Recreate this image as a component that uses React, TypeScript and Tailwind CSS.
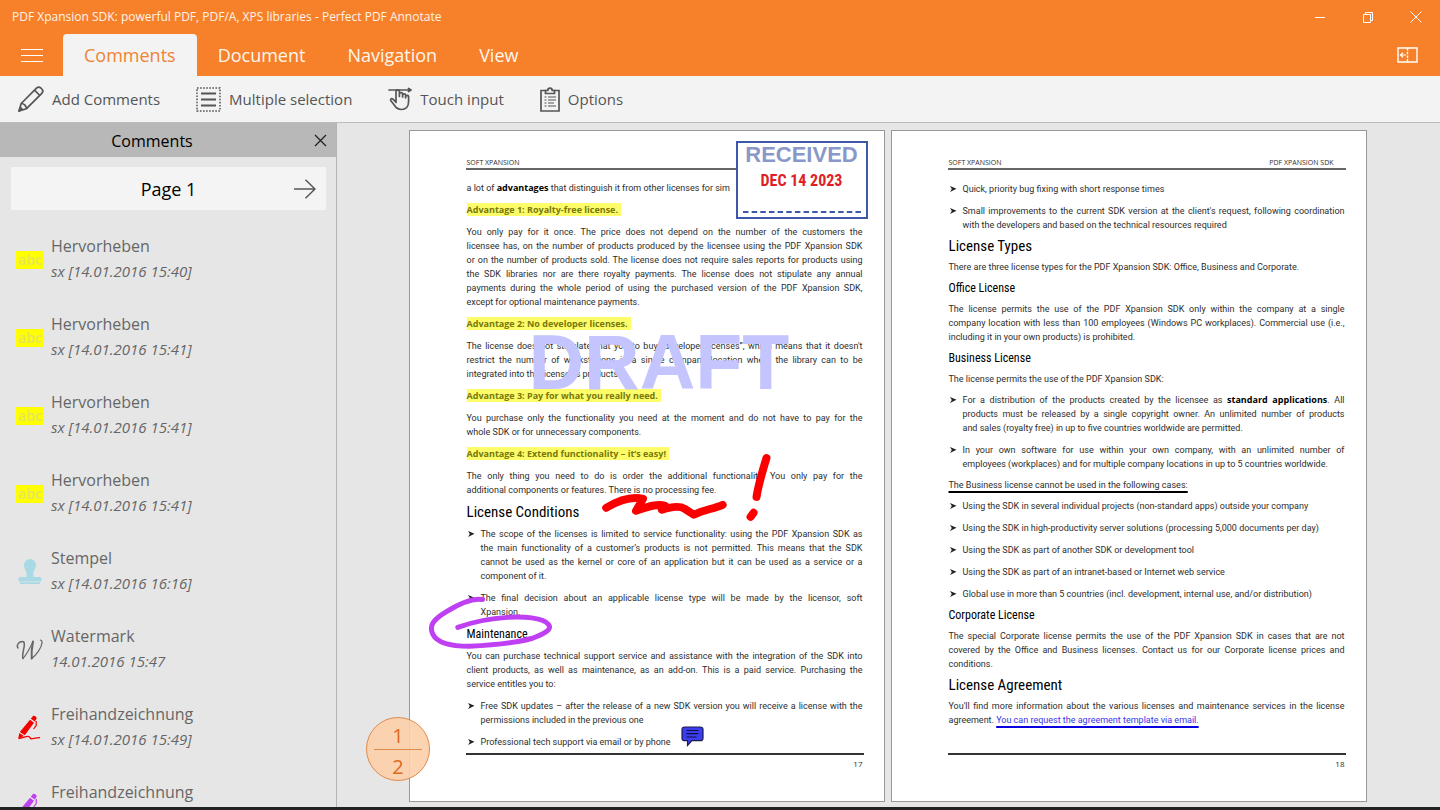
import type { ReactNode } from "react";
import clsx from "clsx";

type Kind = "highlight" | "stamp" | "watermark" | "ink-red" | "ink-purple";

type Comment = { kind: Kind; title: string; meta: string };

const COMMENTS: Comment[] = [
  { kind: "highlight", title: "Hervorheben", meta: "sx [14.01.2016 15:40]" },
  { kind: "highlight", title: "Hervorheben", meta: "sx [14.01.2016 15:41]" },
  { kind: "highlight", title: "Hervorheben", meta: "sx [14.01.2016 15:41]" },
  { kind: "highlight", title: "Hervorheben", meta: "sx [14.01.2016 15:41]" },
  { kind: "stamp", title: "Stempel", meta: "sx [14.01.2016 16:16]" },
  { kind: "watermark", title: "Watermark", meta: "14.01.2016 15:47" },
  { kind: "ink-red", title: "Freihandzeichnung", meta: "sx [14.01.2016 15:49]" },
  { kind: "ink-purple", title: "Freihandzeichnung", meta: "" },
];

const TABS = ["Comments", "Document", "Navigation", "View"];

function InkIcon({ color }: { color: string }) {
  return (
    <svg width="26" height="26" viewBox="0 0 26 26" fill={color}>
      <path d="M14.800 3.800 16.800 1.200c1-1.200 4.600 1 3.800 2.600l-1.800 2.800zM14 4.800l4 3L8.800 20.200l-5-3.200zM3.400 18l4.400 3-5.600 2.600z" />
      <path d="M20.200 6v4.500l-2.600 3.500" fill="none" stroke={color} strokeWidth="1.200" />
      <path
        d="M2.500 23.500c4-.3 7-2.200 9.500-2.200 2.500 0 1.500 2.500 3.500 2.500s4-1.200 8.500-1.200"
        fill="none"
        stroke={color}
        strokeWidth="1.300"
      />
    </svg>
  );
}

function CommentIcon({ kind }: { kind: Kind }) {
  switch (kind) {
    case "highlight":
      return (
        <span className="flex h-[18px] w-7 items-center justify-center bg-[#ffff00] text-[14px] leading-[16px] font-semibold text-[#e6e65a]">
          abc
        </span>
      );
    case "stamp":
      return (
        <svg width="28" height="26" viewBox="0 0 28 26" fill="#a9d9e5">
          <path d="M14 0a6 6 0 0 1 6 6c0 3.500-2.600 5.500-2.600 9.500V18H24a1.500 1.500 0 0 1 1.500 1.500V22.500h-23v-3A1.500 1.500 0 0 1 4 18h6.600v-2.500C10.600 11.500 8 9.500 8 6a6 6 0 0 1 6-6zM4 23.200h20V25H4z" />
        </svg>
      );
    case "watermark":
      return (
        <svg width="28" height="22" viewBox="0 0 28 22" fill="none" stroke="#666" strokeLinecap="round">
          <path d="M2 9C0 6 3 2.500 6.500 2.500c2.500 0 2 4 1 8.500-.8 3.500-.8 7.500-.5 8.500" strokeWidth="1.500" />
          <path d="M7 19.500C10 16 14.500 8 17 2.500" strokeWidth="1.100" />
          <path d="M17 2.500c-1 5-1.700 12-1.300 17" strokeWidth="2" />
          <path d="M15.700 19.500C20 16 25.500 9 26 4c.1-1.500-.5-2.800-1.600-3" strokeWidth="1.200" />
        </svg>
      );
    case "ink-red":
      return <InkIcon color="#f40000" />;
    case "ink-purple":
      return <InkIcon color="#c040f0" />;
  }
}

function PencilIcon() {
  return (
    <svg width="26" height="26" viewBox="0 0 26 26" fill="none" stroke="#555" strokeWidth="1.700" strokeLinejoin="round">
      <path d="M1 25l2.200-7.500L18.500 2.200c1.200-1.200 3-1.300 4.300-.2l1 1c1.300 1.200 1.200 3 0 4.300L8.500 22.700z" />
      <path d="M16.500 4.200l5.300 5.300M3.200 17.500c2.400-.2 5.200 2.300 5.300 5.200M1 25l1.500-3.500 2 2z" />
    </svg>
  );
}

function MultiSelectIcon() {
  return (
    <svg width="25" height="25" viewBox="0 0 25 25" fill="none" stroke="#555">
      <rect x="1" y="1" width="23" height="23" strokeWidth="1.500" strokeDasharray="1.600 1.470" />
      <path d="M5 6.500h15M5 12.500h15M5 18.500h15" strokeWidth="1.900" />
    </svg>
  );
}

function TouchIcon() {
  return (
    <svg width="24" height="24" viewBox="0 0 24 24" fill="none" stroke="#555" strokeWidth="1.700" strokeLinejoin="round" strokeLinecap="round">
      <path d="M1 3h21M20.500 1.500L23 3l-2.500 1.500" />
      <path d="M8 15.500V4.500c0-2.300 3.400-2.300 3.400 0v5M11.400 9V6.800c0-1.600 3.200-1.600 3.200 0V10M14.600 8c0-1.500 3-1.500 3 0v2.800M17.600 9.200c0-1.300 3-1.300 3 .2v5c0 5-2.600 8.100-7.300 8.100-3.600 0-5.200-1.500-6.900-4.200L2.700 13.500c-.6-1.600 1-2.500 2.300-1.400l3 3" />
    </svg>
  );
}

function ClipboardIcon() {
  return (
    <svg width="20" height="25" viewBox="0 0 20 25" fill="none" stroke="#555" strokeWidth="1.700">
      <path d="M6 3.500H1V24h18V3.500h-5" />
      <path d="M5.500 6.500v-3h2.300c0-3.200 4.400-3.200 4.400 0h2.300v3z" />
      <path d="M4.500 10h2M8 10h8M4.500 13h2M8 13h8M4.500 16h2M8 16h6M4.500 19h2M8 19h8" strokeWidth="1.200" />
    </svg>
  );
}

const TOOLS: { label: string; icon: ReactNode }[] = [
  { label: "Add Comments", icon: <PencilIcon /> },
  { label: "Multiple selection", icon: <MultiSelectIcon /> },
  { label: "Touch input", icon: <TouchIcon /> },
  { label: "Options", icon: <ClipboardIcon /> },
];

function TitleBar() {
  return (
    <div className="flex h-[34px] items-center justify-between pl-3 text-white">
      <h1 className="text-[12px] font-medium text-[#fff3e8]">
        PDF Xpansion SDK: powerful PDF, PDF/A, XPS libraries - Perfect PDF Annotate
      </h1>
      <div className="flex h-full">
        <button type="button" aria-label="Minimize" className="flex w-12 items-center justify-center">
          <svg width="12" height="12" viewBox="0 0 12 12" stroke="#fff" fill="none">
            <path d="M1 6.500h10" />
          </svg>
        </button>
        <button type="button" aria-label="Restore" className="flex w-12 items-center justify-center">
          <svg width="12" height="12" viewBox="0 0 12 12" stroke="#fff" fill="none">
            <path d="M1.500 3.500h7v8h-7zM3.500 3.500v-2h7v8h-2" />
          </svg>
        </button>
        <button type="button" aria-label="Close" className="flex w-12 items-center justify-center">
          <svg width="12" height="12" viewBox="0 0 12 12" stroke="#fff" fill="none">
            <path d="M.5.5l11 11M11.500.5l-11 11" />
          </svg>
        </button>
      </div>
    </div>
  );
}

function TabBar() {
  return (
    <nav className="flex h-[42px] items-center pr-[22px] text-[18px] text-[#fff6ee]">
      <button type="button" aria-label="Menu" className="flex h-full w-[63px] items-center justify-center">
        <svg width="22" height="14" viewBox="0 0 22 14" stroke="#fff" fill="none">
          <path d="M0 1.500h22M0 7.500h22M0 13.500h22" />
        </svg>
      </button>
      {TABS.map((tab, i) => (
        <button
          key={tab}
          type="button"
          className={clsx(
            "h-full px-[21px]",
            i === 0 && "rounded-t-[4px] bg-[#f3f3f3] text-[#ef8433]",
          )}
        >
          {tab}
        </button>
      ))}
      <button type="button" aria-label="Toggle panel" className="ml-auto">
        <svg width="21" height="16" viewBox="0 0 21 16" stroke="#fff" fill="none" strokeWidth="1.400">
          <path d="M1 1h19v14H1z" />
          <path d="M10.500 1v14" strokeDasharray="2.500 1.200" />
          <path d="M3.500 8H9M6 5.800L3.500 8 6 10.200" strokeWidth="1.200" />
        </svg>
      </button>
    </nav>
  );
}

function Toolbar() {
  return (
    <div className="flex h-[47px] shrink-0 items-center gap-9 border-b border-[#bdbdbd] bg-[#f3f3f3] pl-[18px] text-[15px] text-[#555]">
      {TOOLS.map((tool) => (
        <button key={tool.label} type="button" className="flex items-center gap-2">
          {tool.icon}
          {tool.label}
        </button>
      ))}
    </div>
  );
}

function CommentsPanel() {
  return (
    <aside className="flex w-[337px] shrink-0 flex-col overflow-hidden border-r border-[#b4b4b4]">
      <div className="flex h-[34px] shrink-0 items-center bg-[#b8b8b8] pr-[7px]">
        <h2 className="flex-1 pt-[2px] pr-2 text-center text-[16px] text-black">Comments</h2>
        <button type="button" aria-label="Close panel" className="p-[2px]">
          <svg width="13" height="13" viewBox="0 0 13 13" stroke="#222" fill="none" strokeWidth="1.300">
            <path d="M1 1l11 11M12 1L1 12" />
          </svg>
        </button>
      </div>
      <div className="mr-[10px] ml-[11px] mt-[10px] flex h-[43px] shrink-0 items-center bg-[#f4f4f4] pr-[10px]">
        <span className="flex-1 pt-px pl-8 text-center text-[18px] text-black">Page 1</span>
        <button type="button" aria-label="Next page">
          <svg width="22" height="20" viewBox="0 0 22 20" stroke="#555" fill="none" strokeWidth="1.500">
            <path d="M0 10h21M11.500.8L21 10l-9.500 9.200" />
          </svg>
        </button>
      </div>
      <ul className="mt-6">
        {COMMENTS.map((comment, i) => (
          <li key={i} className="flex h-[78px] pl-4">
            <span className="flex h-[52px] w-[35px] shrink-0 items-center">
              <CommentIcon kind={comment.kind} />
            </span>
            <div className="text-[#666]">
              <div className="text-[16px] leading-[25px]">{comment.title}</div>
              <div className="text-[15px] leading-[25px] italic">{comment.meta}</div>
            </div>
          </li>
        ))}
      </ul>
    </aside>
  );
}

// Each entry is one printed line; every line but the last is justified.
function Lines({ lines }: { lines: ReactNode[] }) {
  return (
    <p>
      {lines.map((line, i) => (
        <span
          key={i}
          className={clsx(
            "block whitespace-nowrap",
            i < lines.length - 1 && "[text-align-last:justify]",
          )}
        >
          {line}
        </span>
      ))}
    </p>
  );
}

function Bullets({ items }: { items: ReactNode[][] }) {
  return (
    <ul className="flex flex-col gap-2">
      {items.map((lines, i) => (
        <li key={i} className="flex">
          <span className="w-[14px] shrink-0">
            <svg width="7" height="6" viewBox="0 0 7 6" className="mt-1 ml-px" fill="#222">
              <path d="M0 0L6.500 2.800 0 6 1.800 3z" />
            </svg>
          </span>
          <div className="min-w-0 flex-1">
            <Lines lines={lines} />
          </div>
        </li>
      ))}
    </ul>
  );
}

function Strong({ children }: { children: ReactNode }) {
  return <strong className="font-['Open_Sans'] text-black">{children}</strong>;
}

function Marked({ children }: { children: ReactNode }) {
  return (
    <h4 className="font-['Open_Sans'] font-bold text-[#77770a]">
      <mark className="bg-[#fdfd6a] pr-[3px] text-inherit">{children}</mark>
    </h4>
  );
}

function Heading({ children }: { children: ReactNode }) {
  return <h2 className="font-['Roboto_Condensed','Lato'] text-[15px] text-black">{children}</h2>;
}

function SubHeading({ children }: { children: ReactNode }) {
  return <h3 className="font-['Roboto_Condensed','Lato'] text-[12px] text-black">{children}</h3>;
}

function Paper({
  number,
  right,
  className,
  overlay,
  children,
}: {
  number: number;
  right?: string;
  className: string;
  overlay?: ReactNode;
  children: ReactNode;
}) {
  return (
    <article className="relative flex max-w-[476px] flex-1 flex-col border border-[#999] bg-white pr-5 pl-14 font-['Roboto'] text-[9px] leading-[14px] text-[#2e2e2e]">
      <header className="mt-[26px] flex justify-between border-b-2 border-[#666] pr-3 pl-px font-['Open_Sans'] text-[7px] leading-[11px]">
        <span>SOFT XPANSION</span>
        <span>{right}</span>
      </header>
      <div className={clsx("flex flex-1 flex-col px-px", className)}>{children}</div>
      <footer className="mb-[30px] border-t-2 border-[#333] pt-[2px] pr-px text-right font-['Open_Sans'] text-[8px]">
        {number}
      </footer>
      {overlay}
    </article>
  );
}

function Stamp() {
  return (
    <div className="absolute top-[10px] right-4 flex h-[78px] w-[132px] flex-col items-center border-2 border-[#3d57a9] bg-white">
      <span className="mt-px font-['Liberation_Sans'] text-[22px] leading-[22px] font-bold text-[#8998c8]">
        RECEIVED
      </span>
      <span className="mt-1 font-['Roboto_Condensed','Roboto'] text-[16px] leading-[22px] font-bold text-[#e01e26]">
        DEC 14 2023
      </span>
      <svg width="118" height="2" viewBox="0 0 118 2" className="mt-auto mb-1">
        <path d="M0 1h118" stroke="#3d57a9" strokeWidth="2" strokeDasharray="5.500 3.150" />
      </svg>
    </div>
  );
}

function Annotations() {
  return (
    <>
      <span className="absolute top-[193px] left-[119px] font-['Liberation_Sans'] text-[77px] leading-[77px] font-bold text-[#c4c4ff]">
        DRAFT
      </span>
      <Stamp />
      <svg viewBox="0 0 476 672" className="absolute inset-0 h-full w-full" fill="none" strokeLinecap="round" strokeLinejoin="round">
        <g stroke="#fb0000" strokeWidth="8">
          <path d="M197 378C207 372 222 366 234 369L227 381C236 378 248 373 256 376L253 380C262 377 271 376 276 379L285 385C295 380 305 379 314 375" />
          <path d="M358 328C354 341 350 354 348 367M345 383L342 387" />
        </g>
        <path
          d="M73 470C60 468 45 477 37 482C22 491 19 497 23 505C28 515 44 517 60 517C82 516 105 514 123 509C136 504 143 500 139 495C134 488 113 487 98 488C81 489 62 493 48 498"
          stroke="#bf40f2"
          strokeWidth="5"
        />
      </svg>
      <svg width="23" height="21" viewBox="0 0 23 21" className="absolute top-[595px] left-[271px]">
        <path
          d="M3.500 1h16A2.500 2.500 0 0 1 22 3.500v8.700a2.500 2.500 0 0 1-2.500 2.500H11L6.500 19.500v-4.800h-3A2.500 2.500 0 0 1 1 12.200V3.500A2.500 2.500 0 0 1 3.500 1z"
          fill="#3c3cf0"
          stroke="#1c1c50"
          strokeWidth="1.200"
        />
        <path d="M5.500 4.500h12M5.500 7.700h12M5.500 11h10" stroke="#111140" strokeWidth="1.200" />
      </svg>
    </>
  );
}

function PageSeventeen() {
  return (
    <Paper number={17} className="gap-2 pt-[11px]" overlay={<Annotations />}>
      <p>
        a lot of <Strong>advantages</Strong> that distinguish it from other licenses for sim
      </p>
      <Marked>Advantage 1: Royalty-free license.</Marked>
      <Lines
        lines={[
          "You only pay for it once. The price does not depend on the number of the customers the",
          "licensee has, on the number of products produced by the licensee using the PDF Xpansion SDK",
          "or on the number of products sold. The license does not require sales reports for products using",
          "the SDK libraries nor are there royalty payments. The license does not stipulate any annual",
          "payments during the whole period of using the purchased version of the PDF Xpansion SDK,",
          "except for optional maintenance payments.",
        ]}
      />
      <Marked>Advantage 2: No developer licenses.</Marked>
      <Lines
        lines={[
          "The license does not stipulate that you to buy “developer licenses”, which means that it doesn't",
          "restrict the number of workstations in a single company location where the library can to be",
          "integrated into the licensee's products.",
        ]}
      />
      <Marked>Advantage 3: Pay for what you really need.</Marked>
      <Lines
        lines={[
          "You purchase only the functionality you need at the moment and do not have to pay for the",
          "whole SDK or for unnecessary components.",
        ]}
      />
      <Marked>Advantage 4: Extend functionality – it’s easy!</Marked>
      <Lines
        lines={[
          "The only thing you need to do is order the additional functionality. You only pay for the",
          "additional components or features. There is no processing fee.",
        ]}
      />
      <Heading>License Conditions</Heading>
      <Bullets
        items={[
          [
            "The scope of the licenses is limited to service functionality: using the PDF Xpansion SDK as",
            "the main functionality of a customer’s products is not permitted. This means that the SDK",
            "cannot be used as the kernel or core of an application but it can be used as a service or a",
            "component of it.",
          ],
          [
            "The final decision about an applicable license type will be made by the licensor, soft",
            "Xpansion.",
          ],
        ]}
      />
      <SubHeading>Maintenance</SubHeading>
      <Lines
        lines={[
          "You can purchase technical support service and assistance with the integration of the SDK into",
          "client products, as well as maintenance, as an add-on. This is a paid service. Purchasing the",
          "service entitles you to:",
        ]}
      />
      <Bullets
        items={[
          [
            "Free SDK updates – after the release of a new SDK version you will receive a license with the",
            "permissions included in the previous one",
          ],
          ["Professional tech support via email or by phone"],
        ]}
      />
    </Paper>
  );
}

function PageEighteen() {
  return (
    <Paper number={18} right="PDF XPANSION SDK" className="gap-[7px] pt-3">
      <Bullets
        items={[
          ["Quick, priority bug fixing with short response times"],
          [
            "Small improvements to the current SDK version at the client's request, following coordination",
            "with the developers and based on the technical resources required",
          ],
        ]}
      />
      <Heading>License Types</Heading>
      <p>There are three license types for the PDF Xpansion SDK: Office, Business and Corporate.</p>
      <SubHeading>Office License</SubHeading>
      <Lines
        lines={[
          "The license permits the use of the PDF Xpansion SDK only within the company at a single",
          "company location with less than 100 employees (Windows PC workplaces). Commercial use (i.e.,",
          "including it in your own products) is prohibited.",
        ]}
      />
      <SubHeading>Business License</SubHeading>
      <p>The license permits the use of the PDF Xpansion SDK:</p>
      <Bullets
        items={[
          [
            <>
              For a distribution of the products created by the licensee as{" "}
              <Strong>standard applications</Strong>. All
            </>,
            "products must be released by a single copyright owner. An unlimited number of products",
            "and sales (royalty free) in up to five countries worldwide are permitted.",
          ],
          [
            "In your own software for use within your own company, with an unlimited number of",
            "employees (workplaces) and for multiple company locations in up to 5 countries worldwide.",
          ],
        ]}
      />
      <p>
        <span className="underline decoration-black decoration-2 underline-offset-3 [text-decoration-skip-ink:none]">
          The Business license cannot be used in the following cases:
        </span>
      </p>
      <Bullets
        items={[
          ["Using the SDK in several individual projects (non-standard apps) outside your company"],
          ["Using the SDK in high-productivity server solutions (processing 5,000 documents per day)"],
          ["Using the SDK as part of another SDK or development tool"],
          ["Using the SDK as part of an intranet-based or Internet web service"],
          ["Global use in more than 5 countries (incl. development, internal use, and/or distribution)"],
        ]}
      />
      <SubHeading>Corporate License</SubHeading>
      <Lines
        lines={[
          "The special Corporate license permits the use of the PDF Xpansion SDK in cases that are not",
          "covered by the Office and Business licenses. Contact us for our Corporate license prices and",
          "conditions.",
        ]}
      />
      <Heading>License Agreement</Heading>
      <Lines
        lines={[
          "You'll find more information about the various licenses and maintenance services in the license",
          <>
            agreement.{" "}
            <a
              href="#agreement"
              className="text-[#3a34e8] underline decoration-[#0a00e0] decoration-2 underline-offset-3 [text-decoration-skip-ink:none]"
            >
              You can request the agreement template via email.
            </a>
          </>,
        ]}
      />
    </Paper>
  );
}

function PageIndicator() {
  return (
    <div className="absolute bottom-[26px] left-[29px] flex h-16 w-16 flex-col items-center justify-center rounded-full border border-[#e08a4c] bg-[#fccfaa]/90 text-[20px] leading-[34px] text-[#e0691c]">
      <span className="h-[30px]">1</span>
      <span className="h-px w-12 shrink-0 bg-[#e08a4c]" />
      <span className="h-[30px]">2</span>
    </div>
  );
}

export default function App() {
  return (
    <div className="flex h-screen flex-col overflow-hidden bg-[#e6e6e6] font-['Open_Sans','Noto_Sans',sans-serif]">
      <header className="shrink-0 bg-[#f7812a]">
        <TitleBar />
        <TabBar />
      </header>
      <Toolbar />
      <div className="flex min-h-0 flex-1">
        <CommentsPanel />
        <main className="relative flex min-w-0 flex-1 justify-center gap-[6px] overflow-hidden pt-[7px] pr-4 pb-[5px] pl-[14px]">
          <PageSeventeen />
          <PageEighteen />
          <PageIndicator />
        </main>
      </div>
      <div className="h-[3px] shrink-0 bg-[#222]" />
    </div>
  );
}
